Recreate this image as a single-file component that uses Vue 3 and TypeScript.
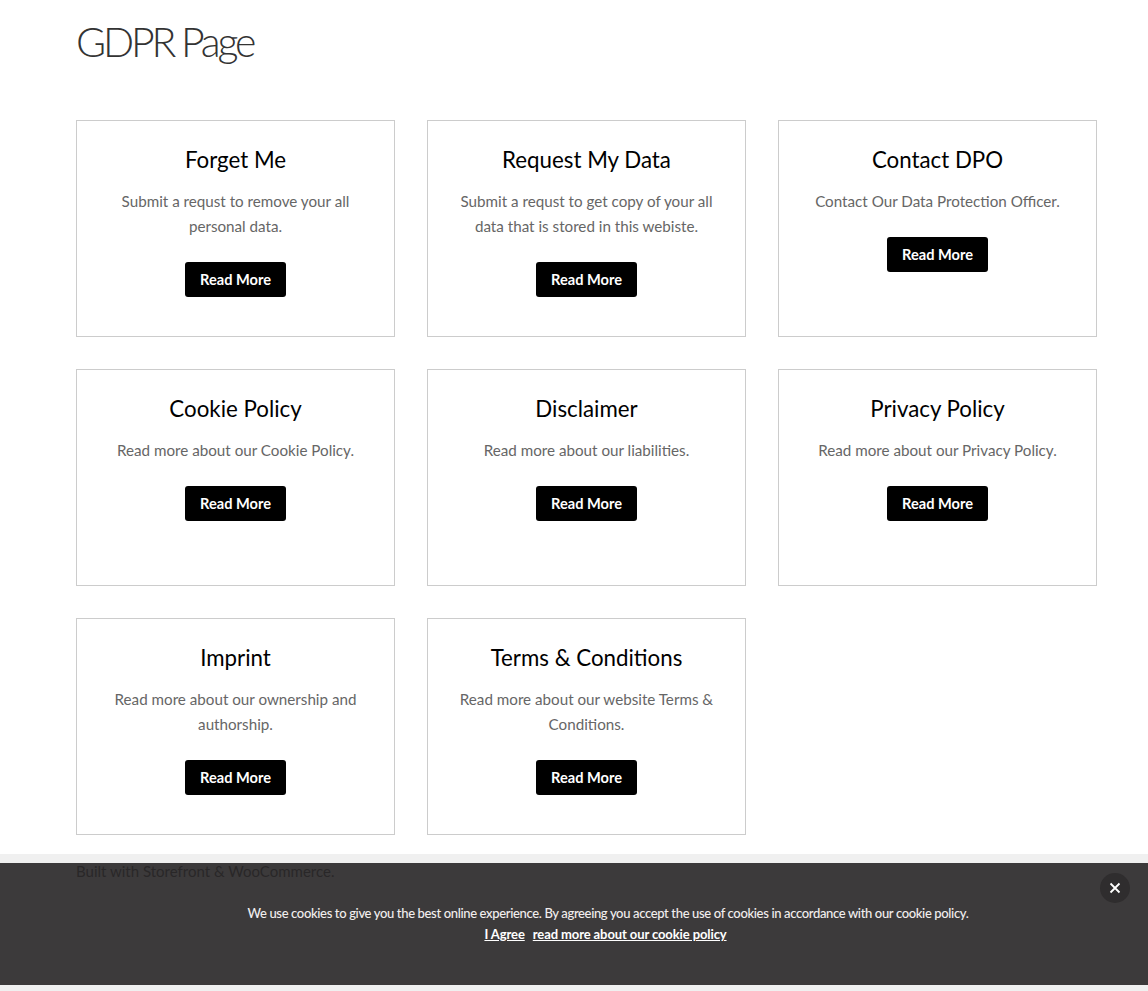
<script setup lang="ts">
interface Card { title: string; lines: string[] }
const cards: Card[] = [
  { title: 'Forget Me', lines: ['Submit a requst to remove your all', 'personal data.'] },
  { title: 'Request My Data', lines: ['Submit a requst to get copy of your all', 'data that is stored in this webiste.'] },
  { title: 'Contact DPO', lines: ['Contact Our Data Protection Officer.'] },
  { title: 'Cookie Policy', lines: ['Read more about our Cookie Policy.'] },
  { title: 'Disclaimer', lines: ['Read more about our liabilities.'] },
  { title: 'Privacy Policy', lines: ['Read more about our Privacy Policy.'] },
  { title: 'Imprint', lines: ['Read more about our ownership and', 'authorship.'] },
  { title: 'Terms & Conditions', lines: ['Read more about our website Terms &', 'Conditions.'] },
]
</script>

<template>
  <div class="page">
    <main class="content">
      <h1 class="page-title">GDPR Page</h1>
      <div class="grid">
        <section v-for="card in cards" :key="card.title" class="card">
          <h2 class="card-title">{{ card.title }}</h2>
          <p class="card-text">
            <span v-for="line in card.lines" :key="line" class="line">{{ line }}</span>
          </p>
          <a class="btn" href="#">Read More</a>
        </section>
      </div>
    </main>
    <footer class="footer">Built with Storefront &amp; WooCommerce.</footer>
    <aside class="cookie">
      <button class="close" aria-label="Close">
        <svg width="12" height="12" viewBox="0 0 12 12"><path d="M1.5 1.5l9 9M10.5 1.5l-9 9" stroke="#fff" stroke-width="1.8" fill="none"/></svg>
      </button>
      <p class="cookie-text">We use cookies to give you the best online experience. By agreeing you accept the use of cookies in accordance with our cookie policy.</p>
      <p class="cookie-links"><a href="#">I Agree</a><a href="#">read more about our cookie policy</a></p>
    </aside>
  </div>
</template>

<style>
html, body { margin: 0; background: #fff; }
</style>

<style scoped>
.page {
  position: relative;
  height: 991px;
  overflow: hidden;
  font-family: "Lato", "Open Sans", sans-serif;
  background: #fff;
}
.content { padding: 0 51px 0 76px; }
.page-title {
  margin: 0;
  padding-top: 15px;
  height: 120px;
  box-sizing: border-box;
  font-size: 41px;
  line-height: 54px;
  font-weight: 300;
  color: #333;
  letter-spacing: -3.2px;
}
.grid {
  display: grid;
  grid-template-columns: repeat(3, 319px);
  grid-auto-rows: 217px;
  gap: 32px;
}
.card {
  box-sizing: border-box;
  border: 1px solid #ccc;
  padding: 24px 20px 0;
  text-align: center;
}
.card-title {
  margin: 0;
  font-size: 22.3px;
  line-height: 30px;
  font-weight: 400;
  color: #000;
}
.card-text {
  margin: 14px 0 23px;
  font-size: 15.2px;
  line-height: 25px;
  color: #666;
}
.line { display: block; white-space: nowrap; }
.btn {
  display: inline-block;
  width: 101px;
  height: 35px;
  line-height: 35px;
  background: #000;
  color: #fff;
  border-radius: 3px;
  font-size: 14.6px;
  font-weight: 700;
  text-decoration: none;
}
.footer {
  position: absolute;
  left: 0;
  right: 0;
  top: 854px;
  bottom: 0;
  background: #f0f0f0;
  padding: 6px 0 0 76px;
  font-size: 15px;
  line-height: 22px;
  color: #333;
}
.cookie {
  position: absolute;
  left: 0;
  right: 0;
  top: 863px;
  height: 122px;
  background: rgba(40, 38, 39, 0.9);
  text-align: center;
  color: #fff;
}
.cookie-text {
  margin: 40px 0 0;
  padding-left: 68px;
  font-size: 13px;
  line-height: 21px;
  letter-spacing: -0.35px;
  font-weight: 500;
  color: #f2eeee;
}
.cookie-links {
  margin: 0;
  padding-left: 63px;
  font-size: 13px;
  line-height: 21px;
  font-weight: 700;
  letter-spacing: -0.1px;
  display: flex;
  justify-content: center;
  gap: 8px;
}
.cookie-links a { color: #fff; text-decoration: underline; }
.close {
  position: absolute;
  top: 10px;
  right: 18px;
  width: 30px;
  height: 30px;
  padding: 0;
  border: 0;
  border-radius: 50%;
  background: #2f2d2e;
  display: flex;
  align-items: center;
  justify-content: center;
}
</style>
